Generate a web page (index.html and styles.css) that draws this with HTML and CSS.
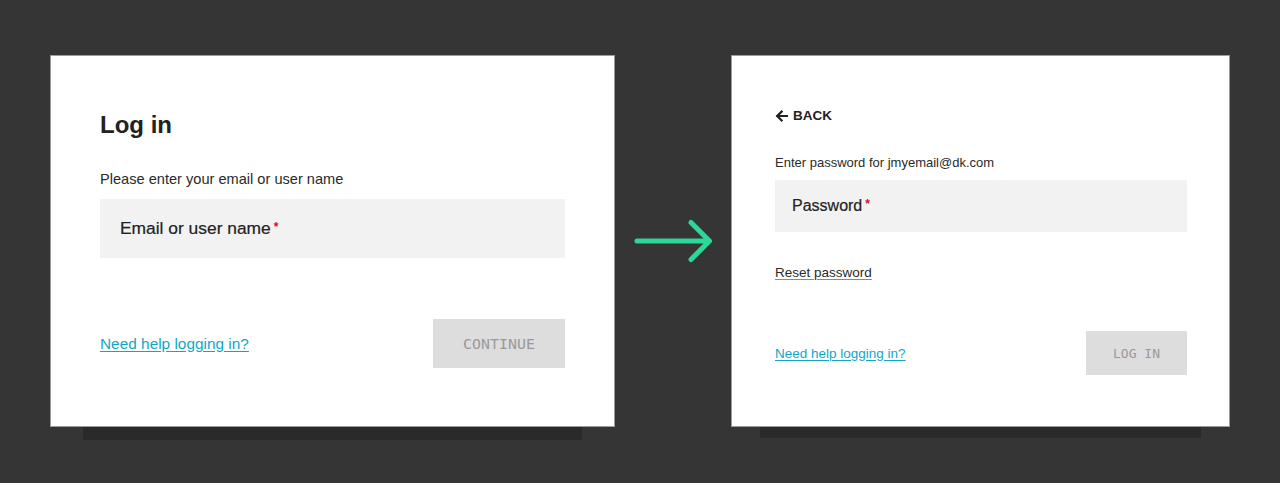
FILE: index.html
```html
<!DOCTYPE html>
<html lang="en">
<head>
<meta charset="utf-8">
<title>Log in flow</title>
<link rel="stylesheet" href="styles.css">
</head>
<body>
<main class="stage">
  <section class="card card-email">
    <h1 class="title">Log in</h1>
    <p class="hint">Please enter your email or user name</p>
    <div class="field field-email">
      <span class="label">Email or user name<span class="req">*</span></span>
    </div>
    <div class="footer footer-email">
      <a class="help" href="#">Need help logging in?</a>
      <button class="btn btn-continue" type="button">CONTINUE</button>
    </div>
  </section>

  <div class="flow">
    <svg class="flow-arrow" width="116" height="60" viewBox="0 0 116 60" aria-hidden="true">
      <path d="M22 30H94M76 11.5L94.5 30 76 48.5" fill="none" stroke="#2cd897" stroke-width="5" stroke-linecap="round" stroke-linejoin="round"/>
    </svg>
  </div>

  <section class="card card-password">
    <a class="back" href="#">
      <svg class="back-icon" width="13" height="12" viewBox="0 0 13 12" aria-hidden="true">
        <path d="M12 6H2.2M6.6 1.6 2.2 6l4.4 4.4" fill="none" stroke="#222" stroke-width="2.2" stroke-linecap="square" stroke-linejoin="miter"/>
      </svg>
      <span>BACK</span>
    </a>
    <p class="hint hint-small">Enter password for jmyemail@dk.com</p>
    <div class="field field-password">
      <span class="label label-small">Password<span class="req">*</span></span>
    </div>
    <a class="reset" href="#">Reset password</a>
    <div class="footer footer-password">
      <a class="help help-small" href="#">Need help logging in?</a>
      <button class="btn btn-login" type="button">LOG IN</button>
    </div>
  </section>
</main>
</body>
</html>
```

FILE: styles.css
```css
* {
  box-sizing: border-box;
}

html, body {
  margin: 0;
  padding: 0;
}

body {
  background: #353535;
  font-family: "Liberation Sans", Arial, sans-serif;
  color: #242424;
  width: 1280px;
  height: 483px;
  overflow: hidden;
}

.stage {
  display: flex;
  align-items: flex-start;
  padding: 55px 0 0 50px;
}

.card {
  background: #ffffff;
  border: 1px solid #9b9b9b;
  height: 372px;
  display: flex;
  flex-direction: column;
}

.card-email {
  width: 565px;
  padding: 55px 49px 0 49px;
  box-shadow: 0 46px 0 -33px #2a2a2a;
}

.card-password {
  width: 499px;
  padding: 50px 42px 0 43px;
  box-shadow: 0 40px 0 -29px #2a2a2a;
}

.title {
  margin: 0;
  font-size: 24px;
  line-height: 28px;
  font-weight: 700;
  color: #222;
}

.hint {
  margin: 31px 0 0 0;
  font-size: 14.6px;
  line-height: 18px;
  color: #2a2a2a;
}

.hint-small {
  margin-top: 31px;
  font-size: 13px;
  line-height: 16px;
}

.field {
  background: #f2f2f2;
  display: flex;
  align-items: center;
}

.field-email {
  margin-top: 11px;
  height: 59px;
  padding-left: 20px;
}

.field-password {
  margin-top: 9px;
  height: 52px;
  padding-left: 17px;
}

.label {
  font-size: 17.4px;
  color: #222;
  -webkit-text-stroke: 0.2px #222;
}

.label-small {
  font-size: 16px;
}

.req {
  color: #e2003b;
  font-size: 12px;
  font-weight: 700;
  vertical-align: 3px;
  margin-left: 3px;
  -webkit-text-stroke: 0;
}

.footer {
  display: flex;
  justify-content: space-between;
  align-items: center;
}

.footer-email {
  margin-top: 61px;
}

.footer-password {
  margin-top: 50px;
}

.help {
  color: #12a6c6;
  font-size: 15.4px;
  text-decoration: underline;
  text-underline-offset: 2px;
}

.help-small {
  font-size: 13.5px;
}

.btn {
  border: 0;
  background: #dddddd;
  color: #999999;
  font-family: "DejaVu Sans Mono", "Liberation Mono", monospace;
  padding: 0;
  margin: 0;
}

.btn-continue {
  width: 132px;
  height: 49px;
  font-size: 14.8px;
  letter-spacing: 0.1px;
}

.btn-login {
  width: 101px;
  height: 44px;
  font-size: 13px;
}

.flow {
  width: 116px;
  height: 372px;
  display: flex;
  align-items: center;
  justify-content: center;
}

.flow-arrow {
  display: block;
}

.back {
  display: flex;
  align-items: center;
  gap: 5px;
  color: #222;
  text-decoration: none;
  font-size: 13.5px;
  line-height: 16px;
  font-weight: 700;
  margin-top: 2px;
}

.back-icon {
  display: block;
}

.reset {
  align-self: flex-start;
  margin-top: 33px;
  font-size: 13.5px;
  line-height: 16px;
  color: #2a2a2a;
  text-decoration: underline;
  text-decoration-color: #8a8a8a;
  text-underline-offset: 2px;
}
```
